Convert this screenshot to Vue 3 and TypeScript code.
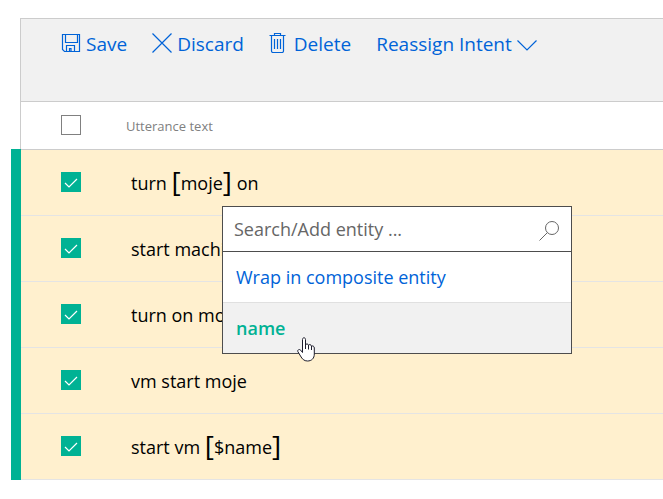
<script setup lang="ts">
import { computed, ref } from 'vue'

interface Segment {
  text: string
  bracketed?: boolean
}

interface Utterance {
  id: number
  segments: Segment[]
  selected: boolean
}

const utterances = ref<Utterance[]>([
  { id: 1, segments: [{ text: 'turn ' }, { text: 'moje', bracketed: true }, { text: ' on' }], selected: true },
  { id: 2, segments: [{ text: 'start machine' }], selected: true },
  { id: 3, segments: [{ text: 'turn on moje' }], selected: true },
  { id: 4, segments: [{ text: 'vm start moje' }], selected: true },
  { id: 5, segments: [{ text: 'start vm ' }, { text: '$name', bracketed: true }], selected: true },
])

const openMenuFor = ref<number | null>(1)
const allSelected = ref(false)
const query = ref('')
const entities = ['name']

const matches = computed(() => entities.filter((e) => e.includes(query.value.toLowerCase())))

function toggleAll(): void {
  utterances.value.forEach((u) => (u.selected = allSelected.value))
}
</script>

<template>
  <main class="page">
    <div class="toolbar">
      <button type="button" class="command save">
        <svg width="20" height="20" viewBox="0 0 20 20" aria-hidden="true">
          <path d="M1.5 1.5h17v17H3.500l-2-2zM4.500 1.5v8h12v-8M5.500 18.500v-6h8v6M8.500 18.500v-3h1.500v3" />
        </svg>
        <span>Save</span>
      </button>
      <button type="button" class="command discard">
        <svg width="20" height="20" viewBox="0 0 20 20" aria-hidden="true">
          <path d="M.5.5l19 19M19.500.5l-19 19" />
        </svg>
        <span>Discard</span>
      </button>
      <button type="button" class="command delete">
        <svg width="17" height="20" viewBox="0 0 17 20" aria-hidden="true">
          <path d="M.5 2.500h16M5.500 2.500v-2h6v2M2.500 2.500v15.500q0 1.500 1.500 1.500h9q1.500 0 1.500-1.500v-15.500M5.500 6v10M8.500 6v10M11.500 6v10" />
        </svg>
        <span>Delete</span>
      </button>
      <button type="button" class="command reassign" aria-haspopup="true">
        <span>Reassign Intent</span>
        <svg width="20" height="20" viewBox="0 0 20 20" aria-hidden="true">
          <path d="M.5 7.500l9.500 9.500 9.500-9.500" />
        </svg>
      </button>
    </div>

    <table class="utterances">
      <thead>
        <tr>
          <th class="marker"></th>
          <th class="pick">
            <label class="check">
              <input v-model="allSelected" type="checkbox" aria-label="Select all utterances" @change="toggleAll" />
              <svg viewBox="0 0 20 20" aria-hidden="true"><path d="M4 11l4 4 8-8" /></svg>
            </label>
          </th>
          <th class="heading" scope="col">Utterance text</th>
        </tr>
      </thead>
      <tbody>
        <tr v-for="u in utterances" :key="u.id" :class="{ selected: u.selected }">
          <td class="marker"></td>
          <td class="pick">
            <label class="check">
              <input v-model="u.selected" type="checkbox" :aria-label="'Select utterance ' + u.id" />
              <svg viewBox="0 0 20 20" aria-hidden="true"><path d="M4 11l4 4 8-8" /></svg>
            </label>
          </td>
          <td class="text">
            <div class="line">
              <template v-for="(s, i) in u.segments" :key="i"><span v-if="s.bracketed" class="token"><span class="bracket">[</span>{{ s.text }}<span class="bracket">]</span></span><template v-else>{{ s.text }}</template></template>
              <div v-if="openMenuFor === u.id" class="menu">
                <label class="search">
                  <input v-model="query" type="text" placeholder="Search/Add entity ..." aria-label="Search/Add entity" />
                  <svg width="22" height="24" viewBox="0 0 22 24" aria-hidden="true">
                    <circle cx="15" cy="11" r="6.500" />
                    <path d="M10.400 15.600L2.500 23.500" />
                  </svg>
                </label>
                <button type="button" class="option">Wrap in composite entity</button>
                <button v-for="e in matches" :key="e" type="button" class="option entity">{{ e }}</button>
                <svg class="pointer" width="18" height="25" viewBox="0 0 18 25" aria-hidden="true">
                  <path d="M5.500 14V2.500C5.500.2 8.500.2 8.500 2.500V8C9 6.400 11.200 6.600 11.500 8.300C12.200 7 14.200 7.400 14.500 9.300C15.500 8.400 17.300 9.200 17.300 11V17C17.300 21.500 14.500 24 10.500 24C7 24 5.200 22 3.500 19L.8 14.500C.3 12.800 2.300 11.800 3.700 13.200L5.500 15.500Z" />
                  <path d="M8.500 7.500V12M11.500 8V12.500M14.500 9V13" />
                </svg>
              </div>
            </div>
          </td>
        </tr>
      </tbody>
    </table>
  </main>
</template>

<style>
body {
  margin: 0;
  background: #fff;
}
</style>

<style scoped>
.page {
  padding: 18px 0 0 11px;
  font-family: "Open Sans", "Noto Sans", sans-serif;
  font-size: 18px;
  line-height: 26px;
  color: #000;
}

button,
input {
  font: inherit;
}

button {
  border: 0;
  background: none;
  cursor: pointer;
}

svg {
  display: block;
  flex: none;
  fill: none;
  stroke: currentColor;
}

.toolbar {
  box-sizing: border-box;
  display: flex;
  align-items: flex-start;
  gap: 25px;
  min-height: 84px;
  margin-left: 9px;
  padding: 12px 40px;
  border: 1px solid #ccc;
  border-right: 0;
  background: #f1f1f1;
  font-size: 19px;
}

.command {
  display: flex;
  align-items: center;
  gap: 5px;
  padding: 0;
  color: #0063d8;
  white-space: nowrap;
}

.command svg {
  margin-bottom: 2px;
  stroke-width: 1.2;
}

.command.delete {
  gap: 8px;
}

.utterances {
  width: 100%;
  border-collapse: separate;
  border-spacing: 0;
}

th,
td {
  padding: 0;
  text-align: left;
  vertical-align: middle;
}

thead th {
  height: 47px;
}

.marker {
  box-sizing: border-box;
  width: 10px;
}

thead .marker {
  border-right: 1px solid #ccc;
}

.pick {
  width: 65px;
  padding: 0 0 2px 40px;
}

.heading {
  color: #808080;
  font-size: 13px;
  font-weight: 400;
}

tbody td {
  height: 65px;
}

tbody .pick {
  height: 63px;
}

thead .pick {
  height: 45px;
}

tbody .pick,
tbody .text {
  border-top: 1px solid #e4e4e4;
}

tbody tr:first-child .pick,
tbody tr:first-child .text {
  border-top-color: #ccc;
}

tbody tr:last-child .pick,
tbody tr:last-child .text {
  border-bottom: 1px solid #e4e4e4;
}

.selected td {
  background: #fff0ce;
}

.selected .marker {
  background: #00b294;
}

.line {
  position: relative;
  display: flex;
  align-items: center;
  height: 26px;
  padding-left: 5px;
  white-space: pre-wrap;
}

.token {
  display: inline-flex;
  align-items: center;
}

.bracket {
  padding-bottom: 4px;
  font-size: 28px;
  line-height: 22px;
}

.check {
  display: grid;
  width: 20px;
  height: 20px;
}

.check input,
.check svg {
  grid-area: 1 / 1;
}

.check input {
  appearance: none;
  box-sizing: border-box;
  width: 20px;
  height: 20px;
  margin: 0;
  border: 1px solid #808080;
  background: #fff;
}

.check input:checked {
  border-color: #00b294;
  background: #00b294;
}

.check svg {
  visibility: hidden;
  color: #fff;
  stroke-width: 1.2;
  pointer-events: none;
}

.check input:checked + svg {
  visibility: visible;
}

.menu {
  position: absolute;
  z-index: 1;
  top: 36px;
  left: 96px;
  box-sizing: border-box;
  width: 350px;
  border: 1px solid #4d4d4d;
  background: #fff;
}

.search {
  display: flex;
  align-items: center;
  height: 44px;
  padding: 0 12px 0 11px;
  border-bottom: 1px solid #4d4d4d;
  color: #666;
}

.search input {
  flex: 1;
  min-width: 0;
  padding: 0;
  border: 0;
  outline: 0;
  background: none;
  color: #333;
}

.search input::placeholder {
  color: #666;
  opacity: 1;
}

.option {
  display: block;
  width: 100%;
  height: 50px;
  padding: 0 13px;
  color: #0063d8;
  text-align: left;
}

.option.entity {
  height: 51px;
  border-top: 1px solid #e0e0e0;
  background: #f1f1f1;
  color: #00b294;
  font-weight: 600;
}

.pointer {
  position: absolute;
  top: 130px;
  left: 74px;
  fill: #fff;
  stroke: #1c1c2b;
  pointer-events: none;
}
</style>
